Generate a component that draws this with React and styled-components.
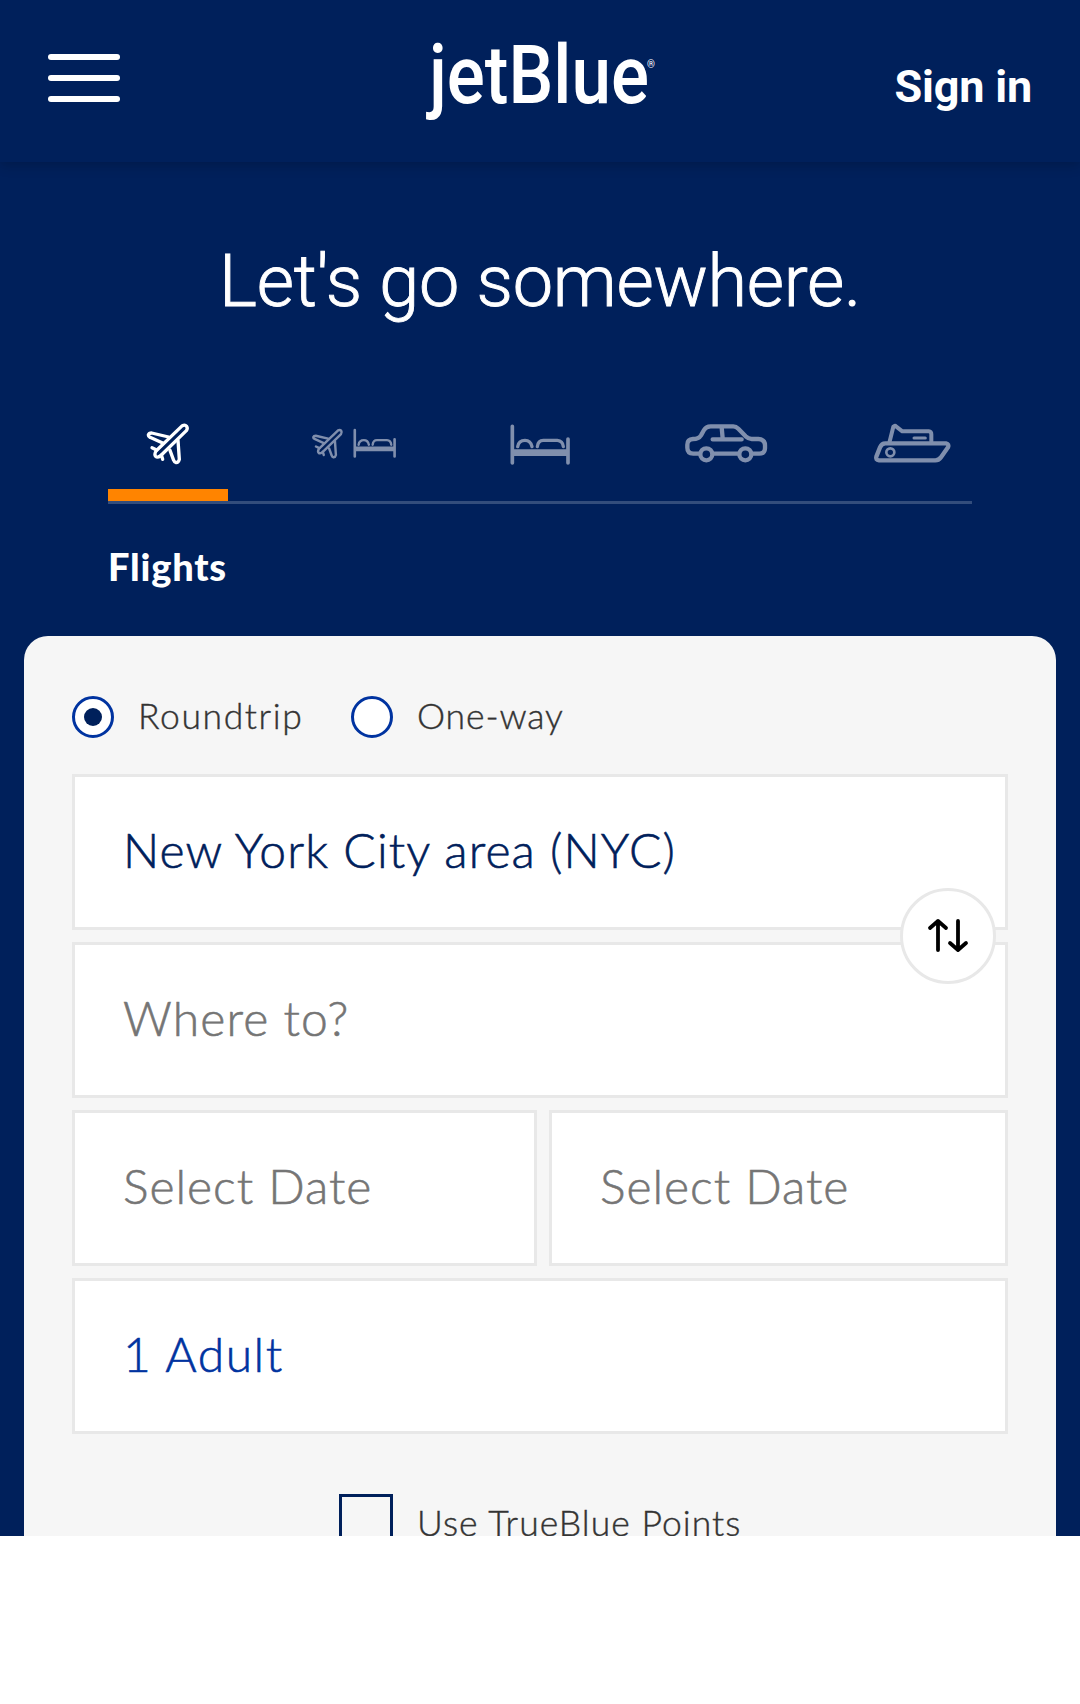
import React from "react";
import styled, { createGlobalStyle } from "styled-components";

const navy = "#00205b";
const blue = "#0033a0";
const body = '"Lato", "Open Sans", sans-serif';
const display = '"Roboto", "Liberation Sans", sans-serif';

const Global = createGlobalStyle`
  * { box-sizing: border-box; }
  body { margin: 0; background: #fff; font-family: ${body}; }
  button { font: inherit; color: inherit; border: 0; padding: 0; background: none; }
`;

const Screen = styled.main`
  height: 1536px;
  overflow: hidden;
  background: ${navy};
`;

const Header = styled.header`
  position: relative;
  display: grid;
  grid-template-columns: 1fr auto 1fr;
  height: 162px;
  padding: 0 48px;
  color: #fff;
  box-shadow: 0 3px 12px rgba(0, 0, 0, 0.2);
`;

const MenuButton = styled.button`
  display: flex;
  flex-direction: column;
  gap: 15px;
  width: 72px;
  height: 48px;
  margin-top: 54px;
`;

const MenuBar = styled.span`
  height: 6px;
  width: 100%;
  border-radius: 3px;
  background: #fff;
`;

const Logo = styled.svg`
  display: block;
  width: 232px;
  height: 110px;
  margin-top: 30px;
  overflow: visible;
  fill: #fff;
  font-family: ${display};
`;

const SignIn = styled.a`
  justify-self: end;
  margin-top: 61px;
  font: 700 45px/52px ${display};
  letter-spacing: -0.2px;
  white-space: nowrap;
`;

const Title = styled.h1`
  margin: 0;
  padding-top: 78px;
  height: 162px;
  text-align: center;
  color: #fff;
  font: 300 72px/84px ${display};
  letter-spacing: -0.25px;
  -webkit-text-stroke: 0.9px currentColor;
  white-space: nowrap;
`;

const Tabs = styled.nav`
  display: grid;
  grid-template-columns: repeat(5, 120px);
  justify-content: space-between;
  margin: 90px 108px 0;
  height: 90px;
  border-bottom: 3px solid #334d7c;
`;

const Tab = styled.button`
  display: block;
  height: 87px;
  color: ${(p) => (p.$active ? "#fff" : "#808fad")};
  border-bottom: 12px solid ${(p) => (p.$active ? "#ff8400" : "transparent")};
`;

const TabIcon = styled.svg`
  display: block;
  width: 120px;
  height: 75px;
  fill: none;
  stroke: currentColor;
  stroke-linecap: round;
  stroke-linejoin: round;
`;

const TabLabel = styled.h2`
  margin: 38px 0 0 108px;
  height: 94px;
  color: #fff;
  font: 900 38px/48px ${body};
  letter-spacing: 0.8px;
`;

const Panel = styled.form`
  display: flex;
  flex-direction: column;
  gap: 12px;
  height: 960px;
  margin: 0 24px;
  padding: 60px 48px 0;
  border-radius: 24px 24px 0 0;
  background: #f6f6f6;
`;

const RadioRow = styled.div`
  display: flex;
  height: 66px;
`;

const Radio = styled.label`
  display: flex;
  align-items: center;
  gap: 24px;
  height: 42px;
  width: ${(p) => p.$width}px;
  color: #333;
  font: 300 35.5px/42px ${body};
  letter-spacing: ${(p) => p.$spacing}px;
  -webkit-text-stroke: 0.4px currentColor;
  white-space: nowrap;
`;

const RadioText = styled.span`
  padding-bottom: 2px;
`;

const RadioMark = styled.span`
  display: grid;
  place-items: center;
  flex: none;
  width: 42px;
  height: 42px;
  border: 3px solid ${blue};
  border-radius: 50%;
  background: #fff;
`;

const RadioDot = styled.span`
  width: 18px;
  height: 18px;
  border-radius: 50%;
  background: ${navy};
`;

const Route = styled.div`
  position: relative;
  display: grid;
  gap: 12px;
`;

const Dates = styled.div`
  display: grid;
  grid-template-columns: 465px 459px;
  gap: 12px;
`;

const Field = styled.div`
  height: 156px;
  padding: 43px 48px 0;
  border: 3px solid #e8e8e8;
  background: #fff;
  color: ${(p) => p.$color || "#757575"};
  font: 300 48px/60px ${body};
  letter-spacing: ${(p) => p.$spacing || 1}px;
  -webkit-text-stroke: 0.6px currentColor;
  white-space: nowrap;
`;

const SwapButton = styled.button`
  position: absolute;
  top: 114px;
  right: 12px;
  width: 96px;
  height: 96px;
  border: 3px solid #e8e8e8;
  border-radius: 50%;
  background: #fff;
`;

const SwapIcon = styled.svg`
  display: block;
  width: 90px;
  height: 90px;
  fill: none;
  stroke: #000;
  stroke-width: 3.8;
  stroke-linecap: round;
  stroke-linejoin: round;
`;

const Points = styled.label`
  display: flex;
  gap: 24px;
  margin: 48px 0 0 267px;
  color: #333;
  font: 300 35.5px/42px ${body};
  letter-spacing: 1.05px;
  -webkit-text-stroke: 0.4px currentColor;
  white-space: nowrap;
`;

const Checkbox = styled.span`
  flex: none;
  width: 54px;
  height: 54px;
  border: 3px solid ${navy};
`;

const PointsText = styled.span`
  padding-top: 8px;
`;

function Plane() {
  return (
    <g strokeWidth="10">
      <path d="M247 77Q255 73 260 79Q264 85 259 92L181 168Q172 174 167 169Q162 163 168 153Z" />
      <path d="M206 111L155 99Q147 99 145 105Q145 110 150 112L188 129" />
      <path d="M234 121L238 178Q236 187 228 188Q223 187 221 181L210 151" />
      <path d="M170 150L156 143M184 165L188 178" />
    </g>
  );
}

function Bed() {
  return (
    <g strokeWidth="11">
      <path d="M97 79V189M264 117V189" />
      <path d="M97 158H264" strokeWidth="20" strokeLinecap="butt" />
      <path d="M113 140Q116 121 135 121Q152 121 156 140M172 140Q174 121 190 121H232Q248 122 250 140" strokeWidth="10" />
    </g>
  );
}

function Car() {
  return (
    <g strokeWidth="13">
      <path d="M657 161H640Q622 160 622 143V134Q622 118 639 117Q656 117 663 106L672 90Q678 79 692 79H760Q768 79 775 86L797 109Q806 117 815 117H835Q855 118 855 136V145Q854 161 838 161H820M773 161H702" />
      <circle cx="679" cy="163" r="18" />
      <circle cx="796" cy="163" r="18" />
      <path d="M698 118H785M725 82L728 115" />
    </g>
  );
}

function Ship() {
  return (
    <g strokeWidth="13">
      <path d="M136 130H318Q328 132 324 142L302 173Q296 181 286 181H117Q106 180 109 170L120 142Q125 130 136 130Z" />
      <path d="M148 128L160 80L165 77L187 94H266Q274 95 274 103V124" strokeWidth="12" />
      <circle cx="151" cy="157" r="12" strokeWidth="8" />
      <path d="M222 114H256" strokeWidth="9" />
    </g>
  );
}

function FlightAndHotel() {
  return (
    <>
      <g transform="translate(534 35) scale(.73)" strokeWidth="11"><Plane /></g>
      <g transform="translate(695 34) scale(.715)"><Bed /></g>
    </>
  );
}

const tabs = [
  { name: "Flights", origin: 24, Icon: Plane },
  { name: "Flights + Hotel", origin: 582, Icon: FlightAndHotel },
  { name: "Hotels", origin: 0, Icon: Bed },
  { name: "Cars", origin: 558, Icon: Car },
  { name: "Cruises", origin: 36, Icon: Ship },
];

export default function App() {
  return (
    <>
      <Global />
      <Screen>
        <Header>
          <MenuButton type="button" aria-label="Menu">
            <MenuBar />
            <MenuBar />
            <MenuBar />
          </MenuButton>
          <Logo viewBox="0 0 232 110" role="img" aria-label="jetBlue">
            <text x="5" y="73" fontSize="82" fontWeight="500" textLength="220" lengthAdjust="spacingAndGlyphs">jetBlue</text>
            <text x="223" y="38" fontSize="10" fontWeight="500">®</text>
          </Logo>
          <SignIn>Sign in</SignIn>
        </Header>

        <Title>Let's go somewhere.</Title>

        <Tabs>
          {tabs.map(({ name, origin, Icon }, i) => (
            <Tab key={name} type="button" aria-label={name} $active={i === 0}>
              <TabIcon viewBox={`${origin} 42 360 225`}>
                <Icon />
              </TabIcon>
            </Tab>
          ))}
        </Tabs>
        <TabLabel>Flights</TabLabel>

        <Panel>
          <RadioRow>
            <Radio $width={279} $spacing={1.6}>
              <RadioMark><RadioDot /></RadioMark>
              <RadioText>Roundtrip</RadioText>
            </Radio>
            <Radio $width={220} $spacing={0.9}>
              <RadioMark />
              <RadioText>One-way</RadioText>
            </Radio>
          </RadioRow>
          <Route>
            <Field $color={navy} $spacing={1.1}>New York City area (NYC)</Field>
            <Field $spacing={1.1}>Where to?</Field>
            <SwapButton type="button" aria-label="Swap cities">
              <SwapIcon viewBox="0 0 90 90">
                <path d="M35 59V30M27 37L35 30L43 37M55 30V59M47 52L55 59L63 52" />
              </SwapIcon>
            </SwapButton>
          </Route>
          <Dates>
            <Field>Select Date</Field>
            <Field>Select Date</Field>
          </Dates>
          <Field $color={blue} $spacing={1.5}>1 Adult</Field>
          <Points>
            <Checkbox />
            <PointsText>Use TrueBlue Points</PointsText>
          </Points>
        </Panel>
      </Screen>
    </>
  );
}
